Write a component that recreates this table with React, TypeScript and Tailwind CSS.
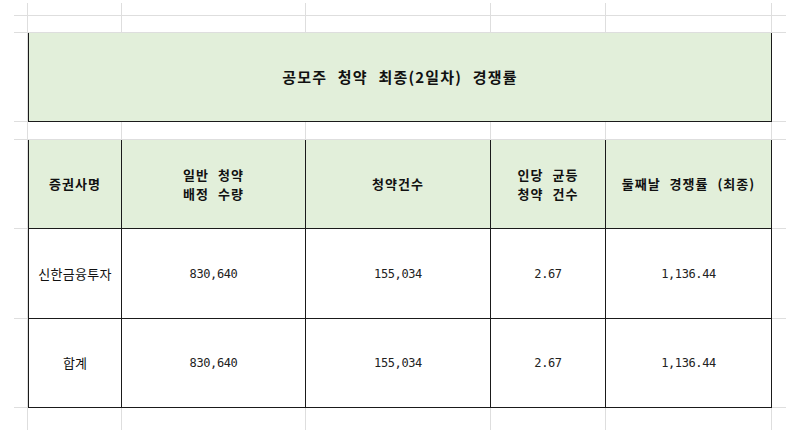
import React from "react";

const KR = "font-['Noto_Sans_CJK_KR','Noto_Sans',sans-serif]";
const NUM = "font-['DejaVu_Sans_Mono','Liberation_Mono',monospace]";

const cell =
  "flex items-center justify-center text-center border border-[#1a1a1a] -ml-px -mt-px text-[#111]";

export default function App() {
  const gridCells = Array.from({ length: 36 });
  return (
    <div className="w-[800px] h-[430px] overflow-hidden bg-white">
      <div className="w-[786px] h-[430px] overflow-hidden pl-[14px] pt-[3px]">
        <div className="grid grid-cols-[14px_94px_184px_185px_115px_166px_15px] grid-rows-[13px_17px_89px_18px_89px_90px_89px_30px]">
          {/* Title box */}
          <div
            className={`${cell} border-l-2 col-start-2 col-span-5 row-start-3 bg-[#e2efda] ${KR} text-[15px] font-bold tracking-[1.2px] [word-spacing:6px]`}
          >
            공모주 청약 최종(2일차) 경쟁률
          </div>

          {/* Header row */}
          <div className={`${cell} border-l-2 col-start-2 row-start-5 bg-[#e2efda] ${KR} text-[13px] font-bold tracking-[1px]`}>
            증권사명
          </div>
          <div className={`${cell} col-start-3 row-start-5 bg-[#e2efda] ${KR} text-[13px] font-bold tracking-[1px] leading-[19px] [word-spacing:5px]`}>
            <div>
              <div>일반 청약</div>
              <div>배정 수량</div>
            </div>
          </div>
          <div className={`${cell} col-start-4 row-start-5 bg-[#e2efda] ${KR} text-[13px] font-bold tracking-[1px]`}>
            청약건수
          </div>
          <div className={`${cell} col-start-5 row-start-5 bg-[#e2efda] ${KR} text-[13px] font-bold tracking-[1px] leading-[19px] [word-spacing:5px]`}>
            <div>
              <div>인당 균등</div>
              <div>청약 건수</div>
            </div>
          </div>
          <div className={`${cell} col-start-6 row-start-5 bg-[#e2efda] ${KR} text-[13px] font-bold tracking-[1px] [word-spacing:5px]`}>
            둘째날 경쟁률 (최종)
          </div>

          {/* Row 1 */}
          <div className={`${cell} border-l-2 col-start-2 row-start-6 bg-white ${KR} text-[13px] tracking-[0.3px]`}>
            신한금융투자
          </div>
          <div className={`${cell} col-start-3 row-start-6 bg-white ${NUM} text-[12px] tracking-[-0.4px] text-[#222]`}>
            830,640
          </div>
          <div className={`${cell} col-start-4 row-start-6 bg-white ${NUM} text-[12px] tracking-[-0.4px] text-[#222]`}>
            155,034
          </div>
          <div className={`${cell} col-start-5 row-start-6 bg-white ${NUM} text-[12px] tracking-[-0.4px] text-[#222]`}>
            2.67
          </div>
          <div className={`${cell} col-start-6 row-start-6 bg-white ${NUM} text-[12px] tracking-[-0.4px] text-[#222]`}>
            1,136.44
          </div>

          {/* Row 2 */}
          <div className={`${cell} border-l-2 col-start-2 row-start-7 bg-white ${KR} text-[13px]`}>
            합계
          </div>
          <div className={`${cell} col-start-3 row-start-7 bg-white ${NUM} text-[12px] tracking-[-0.4px] text-[#222]`}>
            830,640
          </div>
          <div className={`${cell} col-start-4 row-start-7 bg-white ${NUM} text-[12px] tracking-[-0.4px] text-[#222]`}>
            155,034
          </div>
          <div className={`${cell} col-start-5 row-start-7 bg-white ${NUM} text-[12px] tracking-[-0.4px] text-[#222]`}>
            2.67
          </div>
          <div className={`${cell} col-start-6 row-start-7 bg-white ${NUM} text-[12px] tracking-[-0.4px] text-[#222]`}>
            1,136.44
          </div>

          {/* Spreadsheet gridlines filling the remaining cells */}
          {gridCells.map((_, i) => (
            <div key={i} className="border-r border-b border-[#dedede]" />
          ))}
        </div>
      </div>
    </div>
  );
}
